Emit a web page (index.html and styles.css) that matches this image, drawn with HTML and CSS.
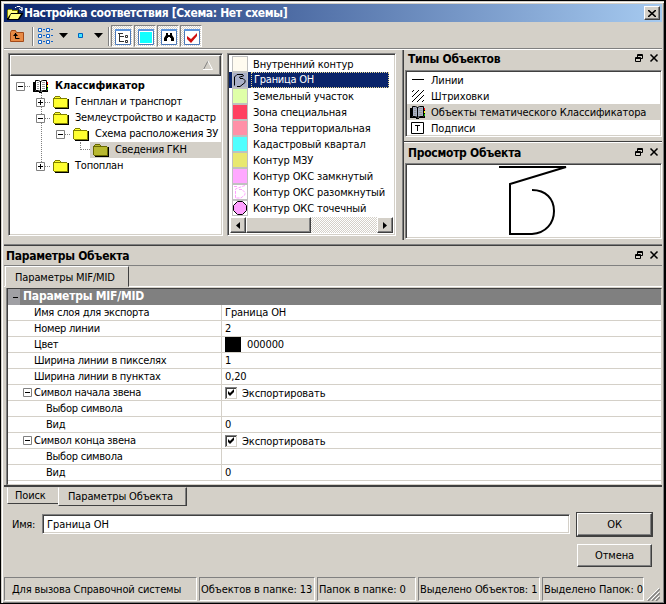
FILE: index.html
```html
<!DOCTYPE html>
<html lang="ru">
<head>
<meta charset="utf-8">
<title>Настройка соответствия</title>
<link rel="stylesheet" href="styles.css">
</head>
<body>
<svg class="defs" width="0" height="0">
  <defs>
    <symbol id="folder" viewBox="0 0 16 13"><path fill="#000" d="M2 12h13V3h1v10H2z"/><path fill="#808000" d="M1 1h1V0h5v1h1v1h6v1h1v9H1V11H0V2h1z"/><path fill="#ffff30" d="M2 1h5v1H2zM1 3h13v8H1z"/></symbol>
    <symbol id="folder-sel" viewBox="0 0 16 13"><path fill="#000" d="M2 12h13V3h1v10H2z"/><path fill="#686800" d="M1 1h1V0h5v1h1v1h6v1h1v9H1V11H0V2h1z"/><path fill="#b8b830" d="M2 1h5v1H2zM1 3h13v8H1z"/></symbol>
    <symbol id="book" viewBox="0 0 16 13"><path fill="#000" d="M0 2h2v9h5v1h2v-1h5V2h1v10H9v1H6v-1H0z"/><path stroke="#000" d="M2.500 .5h3l2 1 2-1h4v10h-4l-2 1-2-1h-3z"/><path stroke="#000" d="M7.500 1v10"/><path stroke="#999" d="M4 2.500h2M4 4.500h2M4 6.500h2M4 8.500h2M9 2.500h3M9 4.500h3M9 6.500h3M9 8.500h3"/><path fill="#f00" d="M14 2h1v2h-1z"/><path fill="#ff0" d="M14 5h1v2h-1z"/><path fill="#0c0" d="M14 8h1v2h-1z"/></symbol>
    <symbol id="minus" viewBox="0 0 9 9"><path fill="#fff" stroke="#808080" d="M.5.500h8v8h-8z"/><path stroke="#000" d="M2 4.500h5"/></symbol>
    <symbol id="plus" viewBox="0 0 9 9"><path fill="#fff" stroke="#808080" d="M.5.500h8v8h-8z"/><path stroke="#000" d="M2 4.500h5M4.500 2v5"/></symbol>
    <symbol id="panelbtns" viewBox="0 0 24 9"><path fill="none" stroke="#000" d="M2.500 3V.5h5v4H6M2 1.500h6M.5 3.500h5v4h-5zM0 4.500h6"/><path fill="none" stroke="#000" stroke-width="1.500" d="M15.500.500l7 7M22.500.500l-7 7"/></symbol>
    <symbol id="check" viewBox="0 0 12 12"><path fill="#fff" d="M0 0h12v12H0z"/><path fill="#808080" d="M0 0h12v1H1v11H0z"/><path fill="#404040" d="M1 1h10v1H2v9H1z"/><path fill="#d4d0c8" d="M11 1h1v11H1v-1h10z"/><path fill="#000" d="M3 4v3l2 2 4-4V2L5 6z"/></symbol>
  </defs>
</svg>
<div class="window">
  <header class="title">
    <svg width="18" height="16" viewBox="0 0 18 16"><path fill="#000" d="M1 5h1V4h4v1h7v3h4v1l-4 6H1z"/><path fill="#808000" d="M1 5h1V4h4v1h6v3H5l-3 5H1z"/><path fill="#ffff80" d="M2 5h4v1h5v2H5l-3 4zM5 9h10l-3 5H3z"/><path fill="none" stroke="#fff" d="M9 2.500h1l1-1h3l2 2v2M13 3.500l3 2V2"/></svg>
    <h1>Настройка соответствия [Схема: Нет схемы]</h1>
    <button class="close"><svg width="8" height="7" viewBox="0 0 8 7"><path stroke="#000" stroke-width="1.600" d="M0 0l8 7M8 0L0 7"/></svg></button>
  </header>

  <div class="toolbar">
    <svg class="up" width="14" height="12" viewBox="0 0 14 12"><path fill="#e88a45" stroke="#a34a18" d="M.5 2.500l1-2h4l1 2h7v9H.5z"/><path fill="none" stroke="#000" d="M5.500 3v5.500h4"/><path fill="#000" d="M3 6h5L5.500 3z"/></svg>
    <i class="vsep"></i>
    <svg class="grid-ico" width="16" height="17" viewBox="0 0 16 17"><g fill="#fff" stroke="#1464c8"><path d="M.5 1.500h3v3h-3zM8.500 1.500h3v3h-3zM.5 7.500h3v3h-3zM8.500 7.500h3v3h-3zM.5 13.500h3v3h-3zM8.500 13.500h3v3h-3z"/><path d="M5 2.500h2M13 2.500h2M5 8.500h2M13 8.500h2M5 14.500h2M13 14.500h2"/></g></svg>
    <svg class="arrow a1" width="9" height="5" viewBox="0 0 9 5"><path d="M0 0h9L4.500 5z"/></svg>
    <svg class="dot" width="5" height="5" viewBox="0 0 5 5"><path fill="#40e8ff" stroke="#0060c0" d="M.5.500h4v4h-4z"/></svg>
    <svg class="arrow a2" width="9" height="5" viewBox="0 0 9 5"><path d="M0 0h9L4.500 5z"/></svg>
    <i class="vsep"></i>
    <div class="toggles">
      <span class="toggle"><svg width="16" height="16" viewBox="0 0 16 16"><path fill="#fff" stroke="#4a78b8" d="M.5.500h15v15H.5z"/><path fill="#5c94dc" d="M0 0h16v2H0z"/><path fill="none" stroke="#333" d="M3 4.500h5M4.500 5v8M5 7.500h4M5 12.500h4M10.500 6.500h2v2h-2zM10.500 11.500h2v2h-2z"/></svg></span>
      <span class="toggle"><svg width="16" height="16" viewBox="0 0 16 16"><path fill="#fff" stroke="#4a78b8" d="M.5.500h15v15H.5z"/><path fill="#5c94dc" d="M0 0h16v2H0z"/><path fill="#1ff" d="M2 3h12v11H2z"/></svg></span>
      <span class="toggle"><svg width="16" height="16" viewBox="0 0 16 16"><path fill="#fff" stroke="#4a78b8" d="M.5.500h15v15H.5z"/><path fill="#5c94dc" d="M0 0h16v2H0z"/><path d="M5 4h2v2h2V4h2v2l2 3v3h-3V9H9V8H7v1H6v3H3V9l2-3z"/></svg></span>
      <span class="toggle"><svg width="16" height="16" viewBox="0 0 16 16"><path fill="#fff" stroke="#4a78b8" d="M.5.500h15v15H.5z"/><path fill="#5c94dc" d="M0 0h16v2H0z"/><path fill="#d01010" d="M3 7l4 3 6-6v3l-6 7-4-4z"/></svg></span>
    </div>
  </div>

  <main class="upper">
    <section class="sunken tree">
      <div class="tree-head"><svg width="10" height="9" viewBox="0 0 10 9"><path fill="none" stroke="#808080" d="M.5 8.500L5 0"/><path fill="none" stroke="#fff" d="M5 0l4.500 8.500H0"/></svg></div>
      <ul class="nodes">
        <li class="n0"><svg class="pm"><use href="#minus"/></svg><i class="dots"></i><svg class="fi white"><use href="#book"/></svg><b>Классификатор</b></li>
        <li class="n1"><svg class="pm"><use href="#plus"/></svg><i class="dots"></i><svg class="fi"><use href="#folder"/></svg><span>Генплан и транспорт</span></li>
        <li class="n1"><svg class="pm"><use href="#minus"/></svg><i class="dots"></i><svg class="fi"><use href="#folder"/></svg><span>Землеустройство и кадастр</span></li>
        <li class="n2"><svg class="pm"><use href="#minus"/></svg><i class="dots"></i><svg class="fi"><use href="#folder"/></svg><span>Схема расположения ЗУ</span></li>
        <li class="n3"><i class="elbow"></i><div class="sel"><svg class="fi"><use href="#folder-sel"/></svg><span>Сведения ГКН</span></div></li>
        <li class="n1"><svg class="pm"><use href="#plus"/></svg><i class="dots"></i><svg class="fi"><use href="#folder"/></svg><span>Топоплан</span></li>
      </ul>
    </section>

    <section class="sunken objects">
      <ul>
        <li><i class="sw ivory"></i><span>Внутренний контур</span></li>
        <li class="current"><i class="sw slate"><svg width="14" height="14" viewBox="0 0 14 14"><path fill="none" stroke="#000" d="M1.500 12.500V4L4 1.500h6M6 4.500l5-2M7 5.500h3l2 2v2l-5 4H4"/></svg></i><span>Граница ОН</span></li>
        <li><i class="sw lime"></i><span>Земельный участок</span></li>
        <li><i class="sw red"></i><span>Зона специальная</span></li>
        <li><i class="sw rose"></i><span>Зона территориальная</span></li>
        <li><i class="sw cyan"></i><span>Кадастровый квартал</span></li>
        <li><i class="sw khaki"></i><span>Контур МЗУ</span></li>
        <li><i class="sw pink"></i><span>Контур ОКС замкнутый</span></li>
        <li><i class="sw"><svg width="14" height="14" viewBox="0 0 14 14"><path fill="none" stroke="#ffa0ff" stroke-dasharray="3 1" d="M1 1.500h3M12 .5L9 1.500 2.500 4v9H6M6 4.500h3l3 3v2L8 13H6"/></svg></i><span>Контур ОКС разомкнутый</span></li>
        <li><i class="sw"><svg width="14" height="14" viewBox="0 0 14 14"><path fill="#ffa0ff" stroke="#000" d="M4.500.5h5l4 4v5l-4 4h-5l-4-4v-5z"/></svg></i><span>Контур ОКС точечный</span></li>
      </ul>
      <div class="scroll">
        <span class="sbtn"><svg width="4" height="7" viewBox="0 0 4 7"><path d="M4 0v7L0 3.500z"/></svg></span>
        <span class="thumb"></span>
        <span class="sbtn end"><svg width="4" height="7" viewBox="0 0 4 7"><path d="M0 0v7l4-3.500z"/></svg></span>
      </div>
    </section>

    <aside class="side">
      <div class="panel-head"><h2>Типы Объектов</h2><svg width="24" height="9"><use href="#panelbtns"/></svg></div>
      <ul class="sunken types">
        <li><svg width="16" height="14" viewBox="0 0 16 14"><path stroke="#000" d="M2 6.500h12"/></svg><span>Линии</span></li>
        <li><svg width="16" height="14" viewBox="0 0 16 14"><path stroke="#000" d="M2 3l2-2M2 8l7-7M2 13L14 1M7 13l7-7M12 13l2-2"/></svg><span>Штриховки</span></li>
        <li class="on"><svg class="fi grey"><use href="#book"/></svg><span>Объекты тематического Классификатора</span></li>
        <li><svg width="16" height="14" viewBox="0 0 16 14"><path fill="#fff" stroke="#000" d="M1.500 1.500h12v11h-12z"/><path fill="none" stroke="#000" d="M5 4.500h5M7.500 4v6"/></svg><span>Подписи</span></li>
      </ul>
      <div class="panel-head second"><h2>Просмотр Объекта</h2><svg width="24" height="9"><use href="#panelbtns"/></svg></div>
      <div class="sunken preview"><svg width="68" height="71" viewBox="0 0 68 71"><path fill="none" stroke="#000" stroke-width="2" d="M0 2h67L11 19v50h22c14-1 22-11 22-23s-8-21-22-21"/></svg></div>
    </aside>
  </main>

  <section class="lower">
    <div class="panel-head wide"><h2>Параметры Объекта</h2><svg width="24" height="9"><use href="#panelbtns"/></svg></div>
    <div class="toptabs"><div class="toptab">Параметры MIF/MID</div></div>
    <div class="props">
      <div class="group"><i><svg width="9" height="9" viewBox="0 0 9 9"><path fill="#a0a0a4" d="M0 0h9v9H0z"/><path stroke="#000" d="M2 4.500h5"/></svg></i><b>Параметры MIF/MID</b></div>
      <div class="row"><label>Имя слоя для экспорта</label><span>Граница ОН</span></div>
      <div class="row"><label>Номер линии</label><span>2</span></div>
      <div class="row"><label>Цвет</label><span class="colour"><i></i>000000</span></div>
      <div class="row"><label>Ширина линии в пикселях</label><span>1</span></div>
      <div class="row"><label>Ширина линии в пунктах</label><span>0,20</span></div>
      <div class="row parent"><label><svg class="pm"><use href="#minus"/></svg>Символ начала звена</label><span><svg width="12" height="12"><use href="#check"/></svg><em>Экспортировать</em></span></div>
      <div class="row child"><label>Выбор символа</label><span></span></div>
      <div class="row child"><label>Вид</label><span>0</span></div>
      <div class="row parent"><label><svg class="pm"><use href="#minus"/></svg>Символ конца звена</label><span><svg width="12" height="12"><use href="#check"/></svg><em>Экспортировать</em></span></div>
      <div class="row child"><label>Выбор символа</label><span></span></div>
      <div class="row child"><label>Вид</label><span>0</span></div>
    </div>
    <div class="bottabs"><div class="bt find">Поиск</div><div class="bt active">Параметры Объекта</div></div>
  </section>

  <div class="form">
    <label>Имя:</label>
    <div class="sunken name">Граница ОН</div>
    <div class="buttons"><button class="ok">ОК</button><button>Отмена</button></div>
  </div>

  <footer class="status">
    <span class="s1">Для вызова Справочной системы</span><span class="s2">Объектов в папке: 13</span><span class="s3">Папок в папке: 0</span><span class="s4">Выделено Объектов: 1</span><span class="s5">Выделено Папок: 0</span>
    <svg width="13" height="13" viewBox="0 0 13 13"><path stroke="#fff" d="M0 12L12 0M4 12l8-8M8 12l4-4"/><path stroke="#808080" stroke-width="1.500" d="M1 13L13 1M5 13l8-8M9 13l4-4"/></svg>
  </footer>
</div>
</body>
</html>
```
FILE: styles.css
```css
* { box-sizing: border-box; }
body { margin: 0; font: 11px/16px "DejaVu Sans Condensed", "DejaVu Sans", sans-serif; color: #000; letter-spacing: -.13px; }
ul { list-style: none; margin: 0; padding: 0; }
h1, h2 { margin: 0; font-size: 11px; }
svg { display: block; flex: none; }
span, label, b, h1, h2 { white-space: nowrap; }
.defs { position: absolute; }
.window { width: 666px; height: 604px; overflow: hidden; background: #d4d0c8; border: 1px solid #000; border-right-width: 2px; padding: 3px 1px 0 3px; display: flex; flex-direction: column; box-shadow: inset 1px 1px #d4d0c8, inset 2px 2px #fff, inset -1px -1px #808080; }

.title { height: 18px; width: 658px; display: flex; align-items: center; padding: 0 2px; background: linear-gradient(90deg, #0a246a, #a6caf0); color: #fff; }
.title h1 { flex: 1; font-size: 12px; letter-spacing: -.35px; }
.close { width: 16px; height: 14px; padding: 0; display: grid; place-items: center; background: #d4d0c8; border: 1px solid; border-color: #fff #404040 #404040 #fff; box-shadow: inset -1px -1px #808080; }

.toolbar { height: 28px; width: 658px; display: flex; align-items: flex-start; border-bottom: 1px solid #fff; box-shadow: inset 0 -1px #808080; padding: 0 0 0 6px; }
.up { margin-top: 8px; }
.vsep { width: 2px; height: 19px; margin: 5px 0 0 8px; border-left: 1px solid #808080; border-right: 1px solid #fff; }
.grid-ico { margin: 5px 0 0 4px; }
.arrow { margin-top: 11px; }
.a1 { margin-left: 5px; }
.dot { margin: 11px 0 0 10px; }
.a2 { margin-left: 11px; }
.a2 + .vsep { margin-left: 5px; }
.toggles { display: flex; gap: 1px; margin: 3px 0 0 1px; }
.toggle { width: 22px; height: 22px; border: 1px solid; border-color: #808080 #fff #fff #808080; background: repeating-conic-gradient(#fff 0 25%, #d4d0c8 0 50%) 0 0 / 2px 2px; padding: 3px 0 0 3px; }

.sunken { background: #fff; border: 1px solid; border-color: #808080 #fff #fff #808080; box-shadow: inset 1px 1px #404040, inset -1px -1px #d4d0c8; }
.upper { height: 195px; display: flex; }
.tree { width: 215px; height: 183px; margin: 3px 0 0 4px; padding: 1px; letter-spacing: -.22px; }
.tree b { letter-spacing: -.05px; }
.tree-head { height: 21px; background: #d4d0c8; border: 1px solid; border-color: #fff #404040 #404040 #fff; box-shadow: inset -1px -1px #808080; display: flex; justify-content: flex-end; padding: 5px 7px 0; }
.nodes { position: relative; padding-top: 2px; }
.nodes::before { content: ""; position: absolute; left: 31px; top: 17px; height: 73px; border-left: 1px dotted #808080; }
.nodes li { position: relative; height: 16px; display: flex; align-items: center; }
.pm { width: 9px; height: 9px; }
.dots { width: 5px; margin-right: 3px; border-top: 1px dotted #808080; }
.fi { width: 16px; height: 13px; }
.white { fill: #fff; }
.grey { fill: #a8b0c4; }
.fi + b, .nodes .fi + span { margin-left: 6px; }
.n0 { padding-left: 6px; }
.n1 { padding-left: 26px; }
.n2 { padding-left: 46px; }
.n3 { padding-left: 70px; }
.elbow { width: 10px; height: 8px; margin: -8px 0 0; border: dotted #808080; border-width: 0 0 1px 1px; }
.sel { flex: 1; height: 16px; display: flex; align-items: center; padding-left: 3px; background: #d4d0c8; }

.objects { width: 169px; height: 183px; margin: 3px 0 0 4px; padding: 2px; overflow: hidden; }
.objects ul { height: 161px; padding-right: 4px; }
.objects li { height: 16px; display: flex; margin-left: -1px; }
.objects li span { padding: 1px 0 0 5px; line-height: 16px; }
.sw { width: 16px; height: 16px; margin-left: 3px; border: 1px solid silver; flex: none; }
.ivory { background: #fffbf0; }
.slate { background: #aab0c8; }
.lime { background: #dfffa8; }
.red { background: #ff4060; }
.rose { background: #ff90a8; }
.cyan { background: #50ffff; }
.khaki { background: #e8e870; }
.pink { background: #ffa8ff; }
.current { background: #0a246a; color: #fff; letter-spacing: -.25px; }
.objects .current span { flex: 1; padding: 0 0 0 2px; margin-left: 3px; border: 1px dotted #e8d890; line-height: 14px; }
.scroll { height: 16px; display: flex; background: repeating-conic-gradient(#fff 0 25%, #d4d0c8 0 50%) 0 0 / 2px 2px; }
.sbtn, .thumb { width: 16px; background: #d4d0c8; border: 1px solid; border-color: #fff #404040 #404040 #fff; box-shadow: inset -1px -1px #808080; display: grid; place-items: center; }
.thumb { width: 65px; }
.end { margin-left: auto; }

.side { width: 259px; margin-left: 7px; border-left: 1px solid #404040; box-shadow: -1px 0 #808080; height: 190px; }
.panel-head { height: 20px; display: flex; justify-content: space-between; padding: 1px 3px 0 4px; }
.panel-head h2 { font-size: 12px; letter-spacing: -.28px; }
.panel-head svg { margin-top: 3px; }
.types { height: 67px; width: 257px; margin-left: 1px; padding: 1px; letter-spacing: -.1px; }
.types li { height: 16px; display: flex; align-items: center; padding-left: 3px; }
.types li span { margin-left: 5px; padding-top: 1px; }
.types .on { background: #d4d0c8; }
.second { height: 22px; margin-top: 4px; border-top: 1px solid #404040; box-shadow: inset 0 1px #fff; padding-top: 3px; }
.preview { height: 76px; width: 257px; margin-left: 1px; padding: 1px 0 0 93px; }

.lower { height: 260px; width: 658px; border-top: 1px solid #404040; box-shadow: 0 -1px #808080; }
.wide { padding: 2px 3px 0 2px; height: 20px; border-bottom: 1px solid #808080; }
.toptabs { height: 21px; display: flex; border-bottom: 1px solid #fff; }
.toptab { width: 124px; height: 21px; margin-left: 1px; padding: 3px 0 0 9px; border: 1px solid; border-color: #fff #404040 #d4d0c8 #fff; background: #d4d0c8; }
.props { margin: 1px 0 0 3px; height: 197px; width: 655px; background: #fff; border: 1px solid; border-color: #404040 #d4d0c8 #d4d0c8 #404040; box-shadow: -1px 0 #808080; }
.group { height: 16px; display: flex; background: #808080; color: #fff; }
.group i { width: 12px; padding: 4px 0 0 3px; background: #a0a0a4; }
.group b { margin-left: 3px; font-size: 12px; letter-spacing: -.22px; line-height: 15px; }
.row { height: 16px; display: flex; border-bottom: 1px solid #d4d0c8; line-height: 15px; }
.row label { width: 214px; padding-left: 26px; border-right: 1px solid #d4d0c8; display: flex; align-items: center; letter-spacing: -.25px; }
.row span { padding-left: 3px; display: flex; align-items: center; }
.colour i { width: 16px; height: 15px; background: #000; margin-right: 6px; }
.row em { font-style: normal; margin: 1px 0 0 5px; }
.parent .pm { margin-right: 2px; }
.row.parent label { padding-left: 15px; }
.row.child label { padding-left: 38px; }
.bottabs { display: flex; height: 22px; border-top: 2px solid #404040; padding-left: 3px; }
.bt { border: 1px solid; border-color: transparent #808080 #404040 #fff; background: #d4d0c8; }
.find { width: 51px; height: 17px; padding-left: 7px; line-height: 15px; border-right: 0; }
.active { width: 129px; height: 19px; padding-left: 9px; line-height: 18px; box-shadow: inset -1px 0 #808080; border-right-color: #404040; }

.form { height: 67px; display: flex; width: 658px; }
.form label { width: 38px; margin-top: 12px; padding-left: 8px; letter-spacing: -.25px; }
.name { width: 528px; height: 20px; margin-top: 9px; padding: 1px 4px; line-height: 18px; letter-spacing: -.05px; }
.buttons { display: flex; flex-direction: column; margin: 7px 0 0 7px; gap: 8px; align-items: center; }
.buttons button { width: 75px; height: 23px; padding: 0; font: inherit; letter-spacing: inherit; color: #000; background: #d4d0c8; border: 1px solid; border-color: #fff #404040 #404040 #fff; box-shadow: inset -1px -1px #808080; }
.buttons .ok { outline: 1px solid #404040; margin-top: 1px; }

.status { display: flex; height: 24px; width: 658px; margin-top: 5px; }
.status span { height: 24px; border: 1px solid; border-color: #808080 #fff #fff #808080; line-height: 23px; padding-left: 1px; margin-right: 2px; letter-spacing: -.08px; }
.status .s1 { width: 193px; padding-left: 7px; letter-spacing: -.14px; }
.s2 { width: 116px; }
.s3 { width: 99px; }
.s4 { width: 122px; }
.s5 { width: 102px; }
.status svg { margin: 11px 0 0 1px; }
```
